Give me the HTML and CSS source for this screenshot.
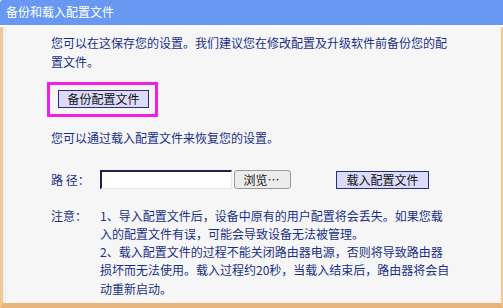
FILE: index.html
```html
<!DOCTYPE html>
<html lang="zh-CN">
  <head>
    <meta charset="UTF-8" />
    <title>备份和载入配置文件</title>
    <link rel="stylesheet" href="styles.css">
  </head>
  <body>
    <div class="panel">
      <div class="panel-title">备份和载入配置文件</div>
      <div class="panel-body">
        <p class="tip">您可以在这保存您的设置。我们建议您在修改配置及升级软件前备份您的配置文件。</p>
        <div class="mark">
          <button class="btn btn-blue">备份配置文件</button>
        </div>
        <p class="tip tip-2">您可以通过载入配置文件来恢复您的设置。</p>
        <div class="path-row">
          <span class="label">路&nbsp;径：</span>
          <input type="text" class="file-input" />
          <button class="btn btn-grey">浏览…</button>
          <button class="btn btn-blue btn-load">载入配置文件</button>
        </div>
        <div class="note-row">
          <span class="label">注意：</span>
          <div class="note-text">
            1、导入配置文件后，设备中原有的用户配置将会丢失。如果您载入的配置文件有误，可能会导致设备无法被管理。<br />
            2、载入配置文件的过程不能关闭路由器电源，否则将导致路由器损坏而无法使用。载入过程约20秒，当载入结束后，路由器将会自动重新启动。
          </div>
        </div>
      </div>
    </div>
  </body>
</html>
```

FILE: styles.css
```css
html,
body {
  margin: 0;
  padding: 0;
}
body {
  width: 503px;
  height: 308px;
  overflow: hidden;
  font-family: "Noto Sans CJK SC", "Liberation Sans", sans-serif;
  font-size: 12px;
  color: #1a3088;
}
.panel {
  width: 503px;
  height: 308px;
  display: flex;
  flex-direction: column;
}
.panel-title {
  height: 25px;
  line-height: 24px;
  padding-left: 6px;
  background-color: #6898f2;
  color: #fff;
  border-bottom: 2px solid #fdfdfd;
  border-top-left-radius: 3px;
}
.panel-body {
  flex: 1;
  box-sizing: border-box;
  padding: 7px 0 0 48px;
  background-color: #f6f6f6;
  border-left: 3px solid #f4c690;
  border-right: 2px solid #f4c690;
  border-bottom: 5px solid #e8b47a;
  box-shadow: inset 3px 0 0 #e6f2f8;
}
.tip {
  margin: 0;
  width: 400px;
  line-height: 18.5px;
}
.tip-2 {
  margin-top: 12px;
}
/* 标注框 */
.mark {
  display: inline-block;
  margin: 11px 0 0 -4px;
  padding: 5px 6px 6px 8px;
  border: 3px solid #f01ee6;
}
.btn {
  box-sizing: border-box;
  height: 18px;
  padding: 0;
  font-family: inherit;
  font-size: 12px;
  line-height: 14px;
  color: #111;
  cursor: pointer;
}
.btn-blue {
  display: block;
  width: 91px;
  background-color: #dcdcfa;
  border: 1px solid #2c2c7c;
}
.btn-grey {
  width: 57px;
  height: 19px;
  margin-left: 2px;
  padding-right: 2px;
  background-color: #ececea;
  border: 1px solid #9a9a9a;
  border-radius: 3px;
}
.path-row {
  display: flex;
  align-items: center;
  margin-top: 23px;
  height: 18px;
}
.label {
  width: 49px;
  flex-shrink: 0;
}
.file-input {
  box-sizing: border-box;
  width: 132px;
  height: 19px;
  padding: 0;
  background-color: #fff;
  border-style: solid;
  border-width: 2px 1px 1px 2px;
  border-color: #20204a #e8e8e8 #e8e8e8 #20204a;
  outline: none;
}
.btn-load {
  margin-left: 45px;
  width: 93px;
}
.note-row {
  display: flex;
  margin-top: 18px;
  line-height: 18.3px;
}
.note-text {
  width: 351px;
}
```
